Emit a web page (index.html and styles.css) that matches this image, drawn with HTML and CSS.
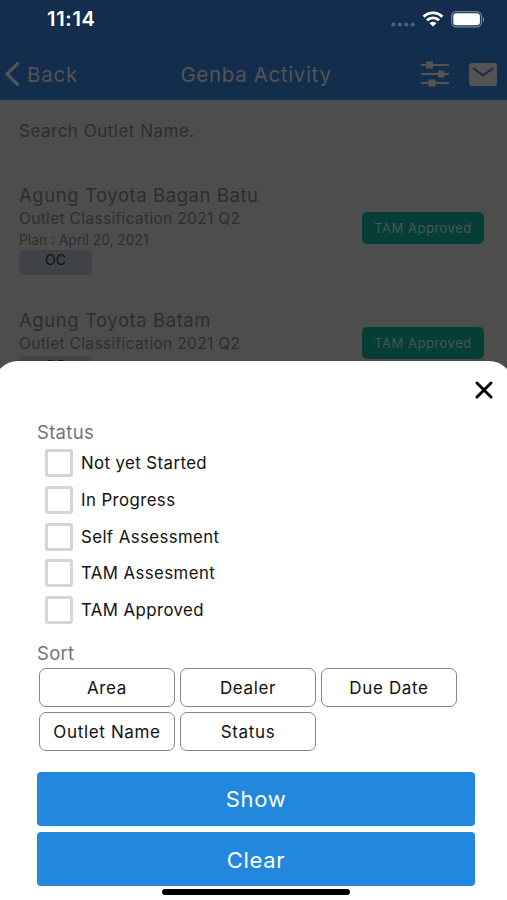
FILE: index.html
```html
<!DOCTYPE html>
<html lang="en">
<head>
<meta charset="utf-8">
<title>Genba Activity</title>
<link rel="stylesheet" href="styles.css">
</head>
<body>
<div class="screen">
  <header class="top">
    <div class="statusbar">
      <span class="time">11:14</span>
      <div class="indicators">
        <svg class="dots" width="24" height="5" viewBox="0 0 24 5"><g fill="#4c617a"><circle cx="2.3" cy="2.5" r="2.1"/><circle cx="8.8" cy="2.5" r="2.1"/><circle cx="15.3" cy="2.5" r="2.1"/><circle cx="21.8" cy="2.5" r="2.1"/></g></svg>
        <svg class="wifi" width="22" height="16" viewBox="0 0 22 16"><g fill="none" stroke="#fff" stroke-width="2.9"><path d="M1.6 5.7a13.4 13.4 0 0 1 18.8 0"/><path d="M5 9.3a8.6 8.6 0 0 1 12 0"/></g><path d="M11 15.6l-3.4-3.4a4.9 4.9 0 0 1 6.8 0z" fill="#fff"/></svg>
        <svg class="battery" width="34" height="17" viewBox="0 0 34 17"><rect x=".7" y=".7" width="29.8" height="15.2" rx="4.6" fill="none" stroke="#72839a" stroke-width="1.3"/><rect x="2.3" y="2.3" width="26.6" height="12" rx="3" fill="#fff"/><path d="M32 5.7c1.6.7 1.6 4.6 0 5.3z" fill="#72839a"/></svg>
      </div>
    </div>
    <nav class="navbar">
      <a class="back"><svg width="17" height="26" viewBox="0 0 17 26"><path d="M14.6 1.6L3 13l11.600 11.400" fill="none" stroke="#555453" stroke-width="3.2"/></svg><span>Back</span></a>
      <h1 class="title">Genba Activity</h1>
      <div class="actions">
        <svg width="28" height="26" viewBox="0 0 28 26"><path d="M0 4h28M0 13h28M0 22h28" stroke="#555453" stroke-width="2"/><path d="M5 .5h7v7H5zM17 9.5h6.500v7H17zM7.500 18.500h7v7h-7z" fill="#555453"/></svg>
        <svg width="28" height="23" viewBox="0 0 28 23"><rect width="28" height="23" rx="3.2" fill="#555453"/><path d="M4 5l10 7.500L24 5" fill="none" stroke="#132e4d" stroke-width="2.1"/></svg>
      </div>
    </nav>
  </header>
  <main class="list">
    <div class="search">Search Outlet Name.</div>
    <article class="outlet">
      <div class="info">
        <h2 class="name">Agung Toyota Bagan Batu</h2>
        <p class="class">Outlet Classification 2021 Q2</p>
        <p class="plan">Plan : April 20, 2021</p>
        <span class="tag">OC</span>
      </div>
      <span class="badge">TAM Approved</span>
    </article>
    <article class="outlet">
      <div class="info">
        <h2 class="name">Agung Toyota Batam</h2>
        <p class="class">Outlet Classification 2021 Q2</p>
        <span class="tag">OC</span>
      </div>
      <span class="badge">TAM Approved</span>
    </article>
  </main>
  <section class="sheet">
    <div class="sheet-top"><svg width="18" height="18" viewBox="0 0 18 18"><path d="M2 2l14 14M16 2L2 16" stroke="#000" stroke-width="2.9" stroke-linecap="round"/></svg></div>
    <h3 class="heading">Status</h3>
    <div class="checks">
      <label class="check"><i class="box"></i><span>Not yet Started</span></label>
      <label class="check"><i class="box"></i><span>In Progress</span></label>
      <label class="check"><i class="box"></i><span>Self Assessment</span></label>
      <label class="check"><i class="box"></i><span>TAM Assesment</span></label>
      <label class="check"><i class="box"></i><span>TAM Approved</span></label>
    </div>
    <h3 class="heading">Sort</h3>
    <div class="sorts">
      <button class="sort">Area</button>
      <button class="sort">Dealer</button>
      <button class="sort">Due Date</button>
      <button class="sort">Outlet Name</button>
      <button class="sort">Status</button>
    </div>
    <div class="buttons">
      <button class="primary">Show</button>
      <button class="primary">Clear</button>
    </div>
    <div class="home"></div>
  </section>
</div>
</body>
</html>
```
FILE: styles.css
```css
* { box-sizing: border-box; }
body, h1, h2, h3, p { margin: 0; font-weight: 400; }
body { background: #4d4d4d; font-family: Inter, "Open Sans", sans-serif; }
svg { display: block; flex: none; }
button { margin: 0; padding: 0; font: inherit; letter-spacing: inherit; }

.screen { position: relative; width: 507px; height: 900px; overflow: hidden; background: #4d4d4d; }
.top { height: 100px; background: #132e4d; }
.statusbar { display: flex; justify-content: space-between; height: 48px; padding: 11px 22px 0 47px; }
.time { color: #fff; font-size: 20px; font-weight: 600; line-height: 17px; letter-spacing: .7px; }
.indicators { display: flex; align-items: flex-start; }
.dots { margin: 11px 7px 0 0; }
.wifi { margin-right: 7px; }

.navbar { display: grid; grid-template-columns: 161px 1fr 150px; align-items: center; height: 52px; padding: 0 10px 0 4px; color: #555453; font-size: 20.5px; }
.back { display: flex; align-items: center; gap: 6px; letter-spacing: .8px; }
.title { font-size: 20.5px; text-align: center; letter-spacing: .65px; white-space: nowrap; }
.actions { display: flex; align-items: center; justify-content: flex-end; gap: 20px; }

.list { padding: 0 23px 0 19px; color: #2d2d2d; }
.search { height: 84px; padding-top: 20px; font-size: 17px; line-height: 22px; letter-spacing: .5px; }
.outlet { display: flex; justify-content: space-between; height: 125px; }
.name { font-size: 18.5px; line-height: 22px; letter-spacing: .57px; }
.class { font-size: 15.5px; line-height: 25px; letter-spacing: .33px; }
.plan { font-size: 13.8px; line-height: 19px; }
.tag { display: block; width: 73px; height: 25px; border-radius: 5px; background: #3f4247; color: #0c1119; font-size: 14px; line-height: 20px; text-align: center; }
.badge { width: 122px; height: 32px; margin-top: 28px; border-radius: 5px; background: #063e37; color: #4a5553; font-size: 13px; line-height: 32px; text-align: center; letter-spacing: .5px; }
.outlet + .outlet .badge { margin-top: 18px; }

.sheet { position: absolute; inset: 360.5px -6px 0; padding: 0 38px 0 43px; border-radius: 24px 24px 0 0; background: #fff; color: #111; }
.sheet-top { display: flex; justify-content: flex-end; height: 59.5px; margin-right: -17.5px; padding-top: 20.5px; }
.heading { height: 25px; color: #747474; font-size: 18.5px; line-height: 25px; letter-spacing: .3px; }
.checks { display: grid; grid-auto-rows: 36.7px; height: 196px; padding: 0 0 0 8px; font-size: 16.8px; letter-spacing: .42px; }
.check { display: flex; align-items: center; gap: 8px; }
.box { width: 28px; height: 28px; border: 3px solid #d3d5da; border-radius: 3px; }
.sorts { display: grid; grid-template-columns: repeat(3, 136px); grid-auto-rows: 39px; gap: 5px; height: 104px; padding: 2px 0 0 2px; font-size: 17px; letter-spacing: .65px; }
.sort { border: 1.5px solid #858585; border-radius: 7px; background: #fff; color: #111; }
.buttons { display: grid; grid-auto-rows: 54px; gap: 6.5px; margin-top: 1.5px; }
.primary { border: 0; border-radius: 4px; background: #2188dd; color: #fff; font-size: 22px; letter-spacing: .7px; padding-top: 1px; }
.home { width: 188px; height: 6px; margin: 2.5px auto 0; border-radius: 3px; background: #000; }
```
